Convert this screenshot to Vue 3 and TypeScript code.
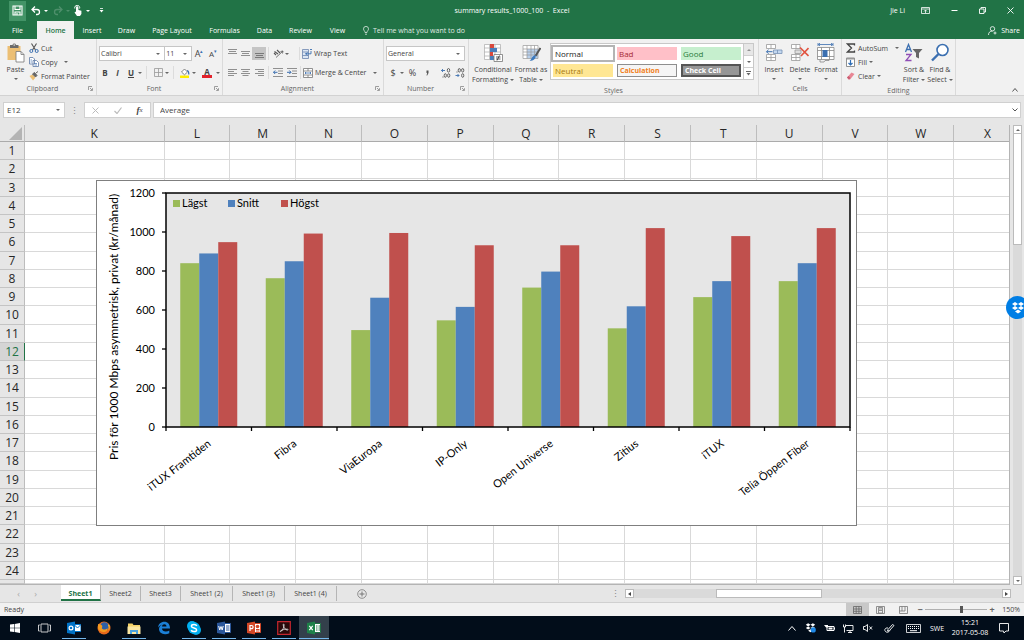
<script setup lang="ts">
import { ref } from 'vue'

interface Category {
  name: string
  values: [number, number, number]
}

const menuTabs = [
  { label: 'File', width: 37 },
  { label: 'Home', width: 37 },
  { label: 'Insert', width: 36 },
  { label: 'Draw', width: 33 },
  { label: 'Page Layout', width: 58 },
  { label: 'Formulas', width: 47 },
  { label: 'Data', width: 33 },
  { label: 'Review', width: 39 },
  { label: 'View', width: 35 },
]

const cellStyles = ['Normal', 'Bad', 'Good', 'Neutral', 'Calculation', 'Check Cell']
const columns = 'KLMNOPQRSTUVWX'.split('')
const sheets = ['Sheet1', 'Sheet2', 'Sheet3', 'Sheet1 (2)', 'Sheet1 (3)', 'Sheet1 (4)']
const activeSheet = ref('Sheet1')
const activeTab = ref('Home')
const activeRow = 12
const nameBox = ref('E12')
const formula = ref('Average')
const zoomLevel = ref(150)

const series = [
  { name: 'Lägst', color: '#9bbb59', x: 77 },
  { name: 'Snitt', color: '#4f81bd', x: 132 },
  { name: 'Högst', color: '#c0504d', x: 185 },
]

const categories: Category[] = [
  { name: 'iTUX Framtiden', values: [840, 890, 948] },
  { name: 'Fibra', values: [763, 850, 992] },
  { name: 'ViaEuropa', values: [497, 663, 995] },
  { name: 'IP-Only', values: [547, 616, 932] },
  { name: 'Open Universe', values: [715, 797, 932] },
  { name: 'Zitius', values: [506, 619, 1020] },
  { name: 'iTUX', values: [666, 748, 979] },
  { name: 'Telia Öppen Fiber', values: [748, 840, 1020] },
]

const plot = { left: 70, right: 754, top: 13, bottom: 247, max: 1200 }
const ticks = [0, 200, 400, 600, 800, 1000, 1200]
const step = (plot.right - plot.left) / categories.length
const barWidth = step / 4.5

const yOf = (v: number): number => plot.bottom - (v / plot.max) * (plot.bottom - plot.top)
const barX = (c: number, s: number): number => plot.left + c * step + barWidth * (0.75 + s)
const centerX = (c: number): number => plot.left + (c + 0.5) * step
</script>

<template>
  <div class="window">
    <header class="top">
      <div class="titlebar">
        <div class="quick">
          <button class="save" aria-label="Save">
            <svg width="11" height="11" viewBox="0 0 11 11"><path d="M1 1h9v9H1zM3 1v3.500h5V1M3 10V7h5v3M5 8v1.500" fill="none" stroke="#fff" stroke-width="1.100" /></svg>
          </button>
          <button aria-label="Undo">
            <svg width="10" height="10" viewBox="0 0 10 10"><path d="M4 0.500 1 3.500 4 6.500M1 3.500h5a2.500 2.500 0 0 1 0 5H5" fill="none" stroke="#fff" stroke-width="1.300" /></svg>
          </button>
          <i class="caret light"></i>
          <button class="faded redo" aria-label="Redo">
            <svg width="10" height="10" viewBox="0 0 10 10"><path d="M6 0.500 9 3.500 6 6.500M9 3.500H4a2.500 2.500 0 0 0 0 5h1" fill="none" stroke="#fff" stroke-width="1.300" /></svg>
          </button>
          <i class="caret light faded"></i>
          <button class="touch" aria-label="Touch mode">
            <svg width="9" height="11" viewBox="0 0 9 11"><path d="M2 6.500V2.500a1.200 1.200 0 0 1 2.400 0V5l3 .8V9L6 11H3L.5 7.500z" fill="#fff" /><path d="M.8 3.500a2.500 2.500 0 1 1 4.800 0" fill="none" stroke="#fff" /></svg>
          </button>
          <i class="caret light"></i>
          <button class="customize" aria-label="Customize toolbar">
            <svg width="5" height="5" viewBox="0 0 5 5"><path d="M1 .500h3" stroke="#fff" stroke-width=".8" /><path d="M.5 2h4L2.500 4.500z" fill="#fff" /></svg>
          </button>
        </div>
        <h1>summary results_1000_100&nbsp; -&nbsp; Excel</h1>
        <div class="account">
          <span class="user">Jie Li</span>
          <button aria-label="Ribbon options"><svg width="9" height="7" viewBox="0 0 9 7"><path d="M.5.500h8v6h-8zM.5 2h8M4.500 6V3M3 4.500 4.500 3 6 4.500" fill="none" stroke="#fff" stroke-width=".8" /></svg></button>
          <button aria-label="Minimize"><svg width="7" height="7" viewBox="0 0 7 7"><path d="M.5 3.500h6" stroke="#fff" /></svg></button>
          <button aria-label="Restore"><svg width="7" height="7" viewBox="0 0 7 7"><path d="M.5 2h4.500v4.500H.5zM2 2V.500h4.500V5H5" fill="none" stroke="#fff" stroke-width=".9" /></svg></button>
          <button aria-label="Close"><svg width="7" height="7" viewBox="0 0 7 7"><path d="m.5.500 6 6m0-6-6 6" stroke="#fff" stroke-width=".9" /></svg></button>
        </div>
      </div>
      <nav class="menu">
        <button v-for="t in menuTabs" :key="t.label" :class="{ active: t.label === activeTab }" :style="{ width: t.width + 'px' }" @click="activeTab = t.label">{{ t.label }}</button>
        <button class="tell">
          <svg width="6" height="9" viewBox="0 0 6 9"><path d="M2 6.500C2 5 .5 4.500.5 2.900a2.500 2.500 0 0 1 5 0C5.500 4.500 4 5 4 6.500zM2 8.200h2" fill="none" stroke="#fff" stroke-width=".8" /></svg>
          Tell me what you want to do
        </button>
        <button class="share">
          <svg width="9" height="9" viewBox="0 0 9 9"><circle cx="4.500" cy="2.800" r="2.200" fill="none" stroke="#fff" stroke-width=".8" /><path d="M.5 9c0-2.500 1.500-4 4-4M7 5.500v3M5.500 7h3" fill="none" stroke="#fff" stroke-width=".8" /></svg>
          Share
        </button>
      </nav>
    </header>

    <section class="ribbon">
      <div class="group clipboard">
        <div class="body">
          <button class="big paste">
            <svg width="18" height="20" viewBox="0 0 18 20"><path d="M.5 3h13v14H.5z" fill="#ecbf74" /><path d="M3 2h2.500a1.800 1.800 0 0 1 3.500 0h2.500v3H3z" fill="#6b6b6b" /><path d="M6.500 1.500h1.500v1H6.500z" fill="#fff" /><path d="M9 8.500h5l3 3v7.500H9z" fill="#fff" stroke="#777" stroke-width=".8" /><path d="M14 8.500v3h3" fill="none" stroke="#777" stroke-width=".8" /></svg>
            <span>Paste</span><i class="caret"></i>
          </button>
          <div class="stack">
            <button><svg width="10" height="10" viewBox="0 0 10 10"><path d="m2.500.500 4 6.500M7.500.500l-4 6.500" stroke="#555" stroke-width="1.100" /><circle cx="2.300" cy="8" r="1.500" fill="none" stroke="#3b6fb0" /><circle cx="7.700" cy="8" r="1.500" fill="none" stroke="#3b6fb0" /></svg>Cut</button>
            <button><svg width="10" height="10" viewBox="0 0 10 10"><path d="M.5.500H4L5.500 2v5h-5zM4 3.500h3.500l2 2v4H4z" fill="#fff" stroke="#6d87ae" stroke-width=".9" /><path d="M5.500 6.500h2.500m-2.500 1.500h2.500M1.500 3H3M1.500 5H3" stroke="#3b6fb0" stroke-width=".7" /></svg>Copy<i class="caret gap"></i></button>
            <button><svg width="10" height="10" viewBox="0 0 10 10"><path d="m.5 5 3-1.500 3 3L4 9.500z" fill="#ecbf74" /><path d="m3.500 3 2-1.500L8 4.500 6.500 6zM7 2l2-1.500" fill="#666" stroke="#666" /></svg>Format Painter</button>
          </div>
        </div>
        <footer>Clipboard<svg class="launcher" width="5" height="5" viewBox="0 0 5 5"><path d="M.5 4V.500H4M2 2l2 2M4.500 2.200v2.300H2.200" fill="none" stroke="#888" stroke-width=".8" /></svg></footer>
      </div>

      <div class="group font">
        <div class="body rows">
          <div class="row">
            <span class="combo family"><select aria-label="Font"><option>Calibri</option></select><i class="caret"></i></span>
            <span class="combo size"><select aria-label="Font size"><option>11</option></select><i class="caret"></i></span>
            <button class="grow">A<sup>▴</sup></button>
            <button class="shrink">A<sup>▾</sup></button>
          </div>
          <div class="row">
            <button class="w14"><b>B</b></button>
            <button class="w12"><b><em>I</em></b></button>
            <button class="w14"><b><u>U</u></b></button>
            <i class="caret"></i><i class="sep"></i>
            <button class="w14" aria-label="Borders"><svg width="9" height="9" viewBox="0 0 9 9"><path d="M.5.500h8v8h-8zM4.500.500v8M.5 4.500h8" fill="none" stroke="#999" stroke-width=".8" /></svg></button>
            <i class="caret"></i><i class="sep"></i>
            <button class="w14" aria-label="Fill color"><svg width="10" height="10" viewBox="0 0 10 10"><path d="M0 7.500h9V10H0z" fill="#ffee00" /><path d="m1.500 4 3-3 3 3-3 2.800z" fill="#fff" stroke="#666" stroke-width=".8" /><path d="M7 2.500c1.500.5 2 1.500 1.800 4" fill="none" stroke="#3b6fb0" stroke-width="1.200" /></svg></button>
            <i class="caret"></i>
            <button class="fontcolor" aria-label="Font color">A</button>
            <i class="caret"></i>
          </div>
        </div>
        <footer>Font<svg class="launcher" width="5" height="5" viewBox="0 0 5 5"><path d="M.5 4V.500H4M2 2l2 2M4.500 2.200v2.300H2.200" fill="none" stroke="#888" stroke-width=".8" /></svg></footer>
      </div>

      <div class="group alignment">
        <div class="body rows">
          <div class="row">
            <button class="w14" aria-label="Top align"><svg width="9" height="9" viewBox="0 0 9 9"><path d="M0 .500h9M1 2.500h7M0 4.500h9" stroke="#777" stroke-width=".8" /></svg></button>
            <button class="w12" aria-label="Middle align"><svg width="9" height="9" viewBox="0 0 9 9"><path d="M0 2.500h9M1 4.500h7M0 6.500h9" stroke="#777" stroke-width=".8" /></svg></button>
            <button class="w14 pressed" aria-label="Bottom align"><svg width="9" height="9" viewBox="0 0 9 9"><path d="M0 4.500h9M1 6.500h7M0 8.500h9" stroke="#666" stroke-width=".8" /></svg></button>
            <i class="sep"></i>
            <button class="w14" aria-label="Orientation"><svg width="11" height="9" viewBox="0 0 11 9"><path d="M3 8.500 10 2M10 2 7.500 2.500M10 2 9.500 4.500" fill="none" stroke="#666" stroke-width=".9" /><path d="m1 4 2 2M1.500 2.500 5 5M4 1l3 3" stroke="#555" stroke-width="1.100" /></svg></button>
            <i class="caret"></i><i class="sep push"></i>
            <button class="wide"><svg width="10" height="10" viewBox="0 0 10 10"><path d="M.5.500h6v9h-6zM.5 3h6M.5 6.500h6" fill="#dce7f4" stroke="#6d87ae" stroke-width=".8" /><path d="M3 4.800h6V2M5.500 3.500 4 4.800 5.500 6M8 .500h2" fill="none" stroke="#3b6fb0" stroke-width=".9" /></svg>Wrap Text</button>
          </div>
          <div class="row">
            <button class="w14" aria-label="Align left"><svg width="9" height="9" viewBox="0 0 9 9"><path d="M0 1.500h9M0 3.500h6M0 5.500h9M0 7.500h6" stroke="#777" stroke-width=".8" /></svg></button>
            <button class="w12" aria-label="Center"><svg width="9" height="9" viewBox="0 0 9 9"><path d="M0 1.500h9M1.500 3.500h6M0 5.500h9M1.500 7.500h6" stroke="#777" stroke-width=".8" /></svg></button>
            <button class="w14" aria-label="Align right"><svg width="9" height="9" viewBox="0 0 9 9"><path d="M0 1.500h9M3 3.500h6M0 5.500h9M3 7.500h6" stroke="#777" stroke-width=".8" /></svg></button>
            <i class="sep"></i>
            <button class="w14" aria-label="Decrease indent"><svg width="10" height="9" viewBox="0 0 10 9"><path d="M0 .500h10M5 3h5M5 5.500h5M0 8.500h10" stroke="#777" stroke-width=".8" /><path d="M4.500 4.300h-4M2.200 2.500.500 4.300 2.200 6" fill="none" stroke="#3b6fb0" /></svg></button>
            <button class="w12" aria-label="Increase indent"><svg width="10" height="9" viewBox="0 0 10 9"><path d="M0 .500h10M5 3h5M5 5.500h5M0 8.500h10" stroke="#777" stroke-width=".8" /><path d="M0 4.300h4M2.300 2.500 4 4.300 2.300 6" fill="none" stroke="#3b6fb0" /></svg></button>
            <i class="sep"></i>
            <button class="wide"><svg width="10" height="10" viewBox="0 0 10 10"><path d="M.5.500h9v9h-9zM.5 3h9M.5 7h9M5 .500V3M5 7v2.500" fill="#fff" stroke="#777" stroke-width=".8" /><path d="M2 5h6M3 4 2 5l1 1M7 4l1 1-1 1" fill="none" stroke="#3b6fb0" stroke-width=".8" /></svg>Merge &amp; Center<i class="caret gap"></i></button>
          </div>
        </div>
        <footer>Alignment<svg class="launcher" width="5" height="5" viewBox="0 0 5 5"><path d="M.5 4V.500H4M2 2l2 2M4.500 2.200v2.300H2.200" fill="none" stroke="#888" stroke-width=".8" /></svg></footer>
      </div>

      <div class="group number">
        <div class="body rows">
          <div class="row">
            <span class="combo format"><select aria-label="Number format"><option>General</option></select><i class="caret"></i></span>
          </div>
          <div class="row">
            <button class="w14 sign">$</button><i class="caret"></i>
            <button class="w14 sign percent-sign">%</button>
            <button class="w12 sign comma" aria-label="Comma style"><svg width="3" height="6" viewBox="0 0 3 6"><path d="M.5.500h2V3L1.200 5.500H.5L1.200 3H.5z" fill="#555" /></svg></button>
            <i class="sep"></i>
            <button class="w14" aria-label="Increase decimal"><svg width="10" height="10" viewBox="0 0 10 10"><path d="M4 2.500H.5M2 1 .5 2.500 2 4" fill="none" stroke="#3b6fb0" stroke-width=".9" /><ellipse cx="7.500" cy="2.300" rx="1.200" ry="1.800" fill="none" stroke="#555" stroke-width=".9" /><ellipse cx="4.300" cy="7.500" rx="1.100" ry="1.800" fill="none" stroke="#555" stroke-width=".9" /><ellipse cx="7.700" cy="7.500" rx="1.100" ry="1.800" fill="none" stroke="#555" stroke-width=".9" /><path d="M1.500 9h1" stroke="#555" /></svg></button>
            <button class="w14" aria-label="Decrease decimal"><svg width="10" height="10" viewBox="0 0 10 10"><path d="M.5 7.500H4M2.500 6 4 7.500 2.500 9" fill="none" stroke="#3b6fb0" stroke-width=".9" /><ellipse cx="4.300" cy="2.300" rx="1.100" ry="1.800" fill="none" stroke="#555" stroke-width=".9" /><ellipse cx="7.700" cy="2.300" rx="1.100" ry="1.800" fill="none" stroke="#555" stroke-width=".9" /><ellipse cx="7.700" cy="7.500" rx="1.100" ry="1.800" fill="none" stroke="#555" stroke-width=".9" /><path d="M1.500 4h1" stroke="#555" /></svg></button>
          </div>
        </div>
        <footer>Number<svg class="launcher" width="5" height="5" viewBox="0 0 5 5"><path d="M.5 4V.500H4M2 2l2 2M4.500 2.200v2.300H2.200" fill="none" stroke="#888" stroke-width=".8" /></svg></footer>
      </div>

      <div class="group styles">
        <div class="body">
          <button class="big conditional">
            <svg width="19" height="20" viewBox="0 0 19 20"><path d="M.5 1.500h16v15H.5zM.5 5h16M.5 9h16M.5 13h16M5.500 1.500v15M11 1.500v15" fill="#fff" stroke="#aaa" stroke-width=".7" /><path d="M6 1h4v4H6zM6 9h3v4H6z" fill="#d9493d" /><path d="M6 5h7v4H6zM6 13h4v4H6z" fill="#4a7ebb" /><path d="M10 11.500h8.500v7H10z" fill="#fff" stroke="#777" stroke-width=".8" /><path d="M12 14h4.500M12 16h4.500M15.500 12.500l-2.500 5" stroke="#333" stroke-width=".8" /></svg>
            <span>Conditional</span><span>Formatting<i class="caret"></i></span>
          </button>
          <button class="big astable">
            <svg width="19" height="20" viewBox="0 0 19 20"><path d="M1 2.500h15v13H1z" fill="#fff" /><path d="M5 6h11v9.500H5z" fill="#b8d0ec" /><path d="M1 2.500h15v13H1zM1 6h15M1 9h15M1 12h15M5 2.500v13M9 2.500v13M12.500 2.500v13" fill="none" stroke="#999" stroke-width=".7" /><path d="m18.500 5-5 8" stroke="#555" stroke-width="2" /><path d="M13.500 12c1 3-2 6-6 6 2-1 2-5 6-6z" fill="#3b78bd" /></svg>
            <span>Format as</span><span>Table<i class="caret"></i></span>
          </button>
          <div class="gallery">
            <button v-for="s in cellStyles" :key="s" :class="s.toLowerCase().replace(' ', '-')"><span>{{ s }}</span></button>
          </div>
          <div class="gallery-nav">
            <button class="off" aria-label="Previous styles"><i class="caret up"></i></button>
            <button aria-label="Next styles"><i class="caret"></i></button>
            <button class="more" aria-label="More styles"><svg width="5" height="5" viewBox="0 0 5 5"><path d="M0 .500h5" stroke="#666" /><path d="M.5 2h4L2.500 4.500z" fill="#666" /></svg></button>
          </div>
        </div>
        <footer>Styles</footer>
      </div>

      <div class="group cells">
        <div class="body">
          <button class="big">
            <svg width="18" height="20" viewBox="0 0 18 20"><path d="M1.500 1.500h9v4h-9zM6 1.500v4M1.500 11.500h9v6h-9zM6 11.500v6M1.500 14.500h9" fill="#fff" stroke="#999" stroke-width=".8" /><path d="M8.500 7h8.500v3.500H8.500zM12.500 7v3.500" fill="#c3d7ef" stroke="#7792b5" stroke-width=".8" /><path d="M7.500 8.700H1.500M3.500 6.800 1.500 8.700l2 2" fill="none" stroke="#3b6fb0" /></svg>
            <span>Insert</span><i class="caret"></i>
          </button>
          <button class="big">
            <svg width="18" height="20" viewBox="0 0 18 20"><path d="M.5 1.500h8.500v4H.5zM5 1.500v4M.5 11.500h8.500v6H.5zM5 11.500v6M.5 14.500h8.500" fill="#fff" stroke="#999" stroke-width=".8" /><path d="M4 7h6v3.500H4z" fill="#ddd" stroke="#999" stroke-width=".8" /><path d="m9 4.500 8.500 8.500M17.500 5 10 13" stroke="#e1533f" stroke-width="1.600" /></svg>
            <span>Delete</span><i class="caret"></i>
          </button>
          <button class="big">
            <svg width="18" height="20" viewBox="0 0 18 20"><path d="M1.500 1.500h14M3 0 1.500 1.500 3 3M14 0l1.500 1.500L14 3M1 0v3M16 0v3" fill="none" stroke="#3b6fb0" stroke-width=".8" /><path d="M.5 4.500h16.500v12H.5zM.5 7.500h16.500M.5 13.500h16.500M4.500 4.500v12M12.500 4.500v12" fill="#fff" stroke="#888" stroke-width=".8" /><path d="M5.500 7h5v7h-5z" fill="#3b6fb0" /><path d="M3 17v2h4l1-1.500h4v-1" fill="none" stroke="#888" stroke-width=".8" /></svg>
            <span>Format</span><i class="caret"></i>
          </button>
        </div>
        <footer>Cells</footer>
      </div>

      <div class="group editing">
        <div class="body">
          <div class="stack">
            <button><svg width="10" height="10" viewBox="0 0 10 10"><path d="M8.500 2.500V1h-7l4 4-4 4h7V7.500" fill="none" stroke="#444" stroke-width="1.300" /></svg>AutoSum<i class="caret gap"></i></button>
            <button><svg width="10" height="10" viewBox="0 0 10 10"><path d="M.5 1h8v8.500h-8z" fill="#fff" stroke="#777" stroke-width=".8" /><path d="M.5 1h8v1.500h-8z" fill="#999" /><path d="M4.500 3v5M2.500 6l2 2 2-2" fill="none" stroke="#2f6db5" stroke-width="1.200" /></svg>Fill<i class="caret"></i></button>
            <button><svg width="10" height="10" viewBox="0 0 10 10"><path d="m1 6.500 4.500-5L8.500 3 4 8.500H2.500z" fill="#e88795" /><path d="m1 6.500 2 2 1.500-1.500-2-2z" fill="#c95c72" /></svg>Clear<i class="caret"></i></button>
          </div>
          <button class="big sort">
            <svg width="20" height="20" viewBox="0 0 20 20"><path d="m1.500 9 3-7.500 3 7.500M2.500 6.500h4" fill="none" stroke="#3b6fb0" stroke-width="1.300" /><path d="M2 11.500h5L2 17.500h5.500" fill="none" stroke="#8f4db5" stroke-width="1.300" /><path d="M8.500 6h10l-3.500 4v5.500l-3-1.500v-4z" fill="#666" /></svg>
            <span>Sort &amp;</span><span>Filter<i class="caret"></i></span>
          </button>
          <button class="big find">
            <svg width="20" height="20" viewBox="0 0 20 20"><circle cx="12.500" cy="7" r="5.500" fill="#fff" stroke="#3b6fb0" stroke-width="1.600" /><path d="m8.500 11-6.500 6.500" stroke="#3b6fb0" stroke-width="2.400" /></svg>
            <span>Find &amp;</span><span>Select<i class="caret"></i></span>
          </button>
        </div>
        <footer>Editing</footer>
      </div>
      <button class="collapse" aria-label="Collapse ribbon"><svg width="6" height="4" viewBox="0 0 6 4"><path d="m.5 3.500 2.500-3 2.500 3" fill="none" stroke="#555" /></svg></button>
    </section>

    <section class="formula">
      <label class="namebox"><input v-model="nameBox" aria-label="Name box" /><i class="caret"></i></label>
      <span class="dots">⋮</span>
      <div class="fx">
        <button aria-label="Cancel"><svg width="7" height="7" viewBox="0 0 7 7"><path d="m.5.500 6 6m0-6-6 6" stroke="#bbb" /></svg></button>
        <button aria-label="Enter"><svg width="8" height="7" viewBox="0 0 8 7"><path d="m.5 4 2.500 2.500L7.500.500" fill="none" stroke="#bbb" stroke-width="1.200" /></svg></button>
        <button class="fn"><b>f</b><sub>x</sub></button>
      </div>
      <div class="content">
        <input v-model="formula" aria-label="Formula" />
        <button aria-label="Expand formula bar"><svg width="6" height="4" viewBox="0 0 6 4"><path d="m.5.500 2.500 2.500L5.500.500" fill="none" stroke="#555" /></svg></button>
      </div>
    </section>

    <main class="sheet">
      <div class="cells-area">
        <table>
          <thead>
            <tr>
              <th class="corner" aria-label="Select all"><svg width="13" height="13" viewBox="0 0 13 13"><path d="M13 0v13H0z" fill="#b4b4b4" /></svg></th>
              <th v-for="c in columns" :key="c" :class="{ last: c === 'X' }">{{ c }}</th>
            </tr>
          </thead>
          <tbody>
            <tr v-for="r in 24" :key="r">
              <th :class="{ current: r === activeRow }">{{ r }}</th>
              <td v-for="c in columns" :key="c"></td>
            </tr>
            <tr><th></th><td v-for="c in columns" :key="c"></td></tr>
          </tbody>
        </table>
        <svg class="chart" viewBox="0 0 761 346" role="img" aria-label="Pris för 1000 Mbps asymmetrisk, privat">
          <rect x=".5" y=".5" width="760" height="345" fill="#fff" stroke="#7f7f7f" />
          <rect :x="plot.left" :y="plot.top" :width="plot.right - plot.left" :height="plot.bottom - plot.top" fill="#e6e6e6" />
          <g v-for="(cat, c) in categories" :key="cat.name">
            <rect v-for="(v, s) in cat.values" :key="s" :x="barX(c, s)" :y="yOf(v)" :width="barWidth" :height="plot.bottom - yOf(v)" :fill="series[s].color" />
          </g>
          <rect :x="plot.left" :y="plot.top" :width="plot.right - plot.left" :height="plot.bottom - plot.top" fill="none" stroke="#000" stroke-width="1.500" />
          <g v-for="t in ticks" :key="t">
            <line :x1="plot.left - 4" :x2="plot.left" :y1="yOf(t)" :y2="yOf(t)" stroke="#000" stroke-width="1.300" />
            <text :x="plot.left - 11" :y="yOf(t) + 4" text-anchor="end">{{ t }}</text>
          </g>
          <line v-for="n in categories.length + 1" :key="n" :x1="plot.left + (n - 1) * step" :x2="plot.left + (n - 1) * step" :y1="plot.bottom" :y2="plot.bottom + 4" stroke="#000" stroke-width="1.300" />
          <text v-for="(cat, c) in categories" :key="cat.name" :transform="`translate(${centerX(c) + 3} 265) rotate(-37.500)`" text-anchor="end">{{ cat.name }}</text>
          <g v-for="s in series" :key="s.name">
            <rect :x="s.x" y="20" width="7" height="7" :fill="s.color" />
            <text :x="s.x + 9" y="27">{{ s.name }}</text>
          </g>
          <text class="axis" transform="translate(22 147) rotate(-90)" text-anchor="middle">Pris för 1000 Mbps asymmetrisk, privat (kr/månad)</text>
        </svg>
      </div>
      <div class="vscroll">
        <button aria-label="Scroll up"><i class="caret up"></i></button>
        <span class="vthumb"></span>
        <span class="vtrack"></span>
        <button aria-label="Scroll down"><i class="caret"></i></button>
      </div>
      <button class="dropbox" aria-label="Dropbox badge">
        <svg width="14" height="12" viewBox="0 0 14 12"><path d="M4 0 7 2 4 4 1 2zM10 0l3 2-3 2-3-2zM4 4l3 2-3 2-3-2zM10 4l3 2-3 2-3-2zM7 7.500l3 2-3 2-3-2z" fill="#fff" /></svg>
      </button>
    </main>

    <nav class="sheetbar">
      <button class="step" aria-label="Previous sheet">‹</button>
      <button class="step" aria-label="Next sheet">›</button>
      <span class="tabs">
        <button v-for="s in sheets" :key="s" :class="{ active: s === activeSheet, long: s.length > 6 }" @click="activeSheet = s">{{ s }}</button>
      </span>
      <button class="add" aria-label="New sheet"><svg width="10" height="10" viewBox="0 0 10 10"><circle cx="5" cy="5" r="4.300" fill="none" stroke="#777" stroke-width=".8" /><path d="M5 2.500v5M2.500 5h5" stroke="#777" /></svg></button>
      <span class="dots">⋮</span>
      <div class="hscroll">
        <button aria-label="Scroll left"><i class="caret west"></i></button>
        <span class="hthumb"></span>
        <button aria-label="Scroll right"><i class="caret east"></i></button>
      </div>
    </nav>

    <footer class="status">
      <span class="ready">Ready</span>
      <button class="view on" aria-label="Normal view"><svg width="9" height="8" viewBox="0 0 9 8"><path d="M.5.500h8v7h-8zM.5 3h8M.5 5.300h8M3.200.500v7M5.900.500v7" fill="none" stroke="#666" stroke-width=".8" /></svg></button>
      <button class="view" aria-label="Page layout view"><svg width="9" height="8" viewBox="0 0 9 8"><path d="M.5.500h8v7h-8zM2.500 1.500h4v5.500h-4zM3 3h3M3 4.500h3" fill="none" stroke="#777" stroke-width=".8" /></svg></button>
      <button class="view" aria-label="Page break view"><svg width="9" height="8" viewBox="0 0 9 8"><path d="M.5.500h8v7h-8zM.5 5h5.500V.500M3 .500V5" fill="none" stroke="#777" stroke-width=".8" /></svg></button>
      <button class="sign">−</button>
      <input v-model="zoomLevel" type="range" min="0" max="255" aria-label="Zoom" />
      <button class="sign">+</button>
      <span class="percent">{{ zoomLevel }}%</span>
    </footer>

    <nav class="taskbar">
      <button aria-label="Start"><svg width="12" height="12" viewBox="0 0 12 12"><path d="M1 2.500 5 2v3.700H1zM5.600 1.900 11 1v4.700H5.600zM1 6.300h4V10l-4-.500zM5.600 6.300H11V11l-5.400-.900z" fill="#fff" /></svg></button>
      <button aria-label="Task view"><svg width="13" height="10" viewBox="0 0 13 10"><path d="M3 1h7v8H3zM1.800 2H.5v6h1.300M11.200 2h1.300v6h-1.300" fill="none" stroke="#ddd" stroke-width=".9" /></svg></button>
      <button class="open app" aria-label="Outlook"><svg width="14" height="14" viewBox="0 0 14 14"><path d="M7 3.500h7v7H7z" fill="#fff" stroke="#0072c6" /><path d="m7.500 4 3 3 3-3" fill="none" stroke="#0072c6" /><path d="M0 2 8 .500v13L0 12z" fill="#0072c6" /><circle cx="4" cy="7" r="1.900" fill="none" stroke="#fff" stroke-width="1.200" /></svg></button>
      <button aria-label="Firefox"><svg width="14" height="14" viewBox="0 0 14 14"><circle cx="7" cy="7" r="6.500" fill="#e8691b" /><circle cx="7.500" cy="5.500" r="4.300" fill="#2d5fa8" /><path d="M1 3c1 .5 3 0 4 1.500S4 7 5.500 8s4 .5 5-1c.5 2-1 4-3.500 4S1.500 9.500 1 7z" fill="#f39a20" /><path d="M12 3c1 2.500.8 5-.5 6.500.5-2 .3-4-.5-5z" fill="#fbc02d" /></svg></button>
      <button class="open" aria-label="File Explorer"><svg width="14" height="13" viewBox="0 0 14 13"><path d="M1 1.500h4.500l1 1.500H13v9H1z" fill="#f3d169" /><path d="M.5 4.500h13V12H.5z" fill="#fbe7a2" /><path d="M3 8h8v4H9v-2H5v2H3z" fill="#4aa3df" /></svg></button>
      <button aria-label="Edge"><svg width="14" height="14" viewBox="0 0 14 14"><path d="M1 6.500C1.500 3 4 .800 7.300.800c3.500 0 5.700 2.700 5.700 6.700H5c0 2 1.700 3 3.800 3 1.300 0 2.500-.4 3.500-1v2.700c-1.200.7-2.700 1-4.200 1C4.500 13.200 2 11 2 8c0-2 1-3.500 3-4.300C3.500 4 2 5 1 6.500zM5 5.500h4.500C9.500 4 8.500 3.300 7.300 3.300S5.200 4 5 5.500z" fill="#1b7fd6" /></svg></button>
      <button class="open" aria-label="Skype"><svg width="14" height="14" viewBox="0 0 14 14"><rect width="10" height="10" rx="5" fill="#00aff0" /><rect x="4" y="4" width="10" height="10" rx="5" fill="#00aff0" /><circle cx="7" cy="7" r="6" fill="#00aff0" /><path d="M9.800 4.800C9.300 3.800 8.200 3.500 7 3.500c-1.500 0-2.600.6-2.600 1.700 0 2.500 5.200 1.200 5.200 3.700 0 1.100-1.100 1.700-2.600 1.700-1.400 0-2.400-.5-2.800-1.500" fill="none" stroke="#fff" stroke-width="1.500" /></svg></button>
      <button class="open app" aria-label="Word"><svg width="14" height="14" viewBox="0 0 14 14"><path d="M7 2.500h6.500v9H7z" fill="#fff" stroke="#2b579a" /><path d="M9 5h3.500M9 7h3.500M9 9h3.500" stroke="#2b579a" /><path d="M0 2 8 .500v13L0 12z" fill="#2b579a" /><path d="m1.700 5 1 4L4 5.500 5.200 9l1-4" fill="none" stroke="#fff" /></svg></button>
      <button class="open app" aria-label="PowerPoint"><svg width="14" height="14" viewBox="0 0 14 14"><path d="M7 2.500h6.500v9H7z" fill="#fff" stroke="#d24726" /><path d="M9 8.500h3.500M9 10h3.500" stroke="#d24726" /><circle cx="10.500" cy="5.500" r="1.800" fill="#d24726" /><path d="M0 2 8 .500v13L0 12z" fill="#d24726" /><path d="M3 10V4.500h1.500a1.500 1.500 0 0 1 0 3.200H3" fill="none" stroke="#fff" stroke-width="1.200" /></svg></button>
      <button class="open" aria-label="Acrobat"><svg width="14" height="14" viewBox="0 0 14 14"><path d="M.7.700h12.600v12.600H.7z" fill="#2a0a0a" stroke="#c4262e" stroke-width="1.200" /><path d="M6.500 3c1 0 .6 2.500-.3 4.500S3.800 11 3.200 10.500 6 8 10.500 8.200c1 .2.500 1.200-.5.900C8 8.500 6.200 5.500 6.200 3.800c0-.5.100-.8.300-.8z" fill="none" stroke="#eee" stroke-width=".8" /></svg></button>
      <button class="open app here" aria-label="Excel"><svg width="14" height="14" viewBox="0 0 14 14"><path d="M7 2.500h6.500v9H7z" fill="#fff" stroke="#217346" /><path d="M9 5h1.500M9 7h1.500M9 9h1.500M11.500 5H13M11.500 7H13M11.500 9H13" stroke="#217346" /><path d="M0 2 8 .500v13L0 12z" fill="#1e8149" /><path d="m2.300 4.800 3.400 4.400M5.700 4.800 2.300 9.200" stroke="#fff" stroke-width="1.200" /></svg></button>
      <div class="tray">
        <button class="t20" aria-label="Hidden icons"><svg width="8" height="5" viewBox="0 0 8 5"><path d="m.5 4.500 3.500-4 3.500 4" fill="none" stroke="#fff" /></svg></button>
        <button class="t20" aria-label="Dropbox"><svg width="11" height="10" viewBox="0 0 14 12"><path d="M4 0 7 2 4 4 1 2zM10 0l3 2-3 2-3-2zM4 4l3 2-3 2-3-2zM10 4l3 2-3 2-3-2zM7 7.500l3 2-3 2-3-2z" fill="#fff" /><circle cx="10.500" cy="8.500" r="3.300" fill="#1e88e5" /></svg></button>
        <button class="t20" aria-label="Battery"><svg width="11" height="8" viewBox="0 0 11 8"><path d="M3 2.500h7v4H3zM10.500 3.500v2" fill="none" stroke="#fff" /><path d="M4.500 3.500h4v2h-4zM0 1h4v2.500H2z" fill="#fff" /></svg></button>
        <button class="t20" aria-label="Network"><svg width="11" height="9" viewBox="0 0 11 9"><path d="M3 1.500h7v5H3.500M5 8.500h4M7 6.500v2M.5.500v2.500h2V.500M1.500 3v5.500" fill="none" stroke="#fff" stroke-width=".9" /></svg></button>
        <button class="t20" aria-label="Volume"><svg width="10" height="8" viewBox="0 0 10 8"><path d="M.5 2.500H2L4.500.500v7L2 5.500H.5zM6.500 2.500l2.500 3M9 2.500l-2.500 3" fill="none" stroke="#fff" stroke-width=".9" /></svg></button>
        <button class="t24" aria-label="Pen"><svg width="11" height="10" viewBox="0 0 11 10"><path d="M4 6.500 8.500 1.500l1.500 1L5.500 7.500 3.500 8zM4 5C1 4.500 0 7 1.500 8.500S5 9 6 7.500" fill="none" stroke="#fff" stroke-width=".9" /></svg></button>
        <button class="t24" aria-label="Keyboard"><svg width="15" height="9" viewBox="0 0 15 9"><path d="M.5.500h14v8H.5z" fill="none" stroke="#fff" stroke-width=".8" /><path d="M2 2.500h11M2 4.500h11" stroke="#fff" stroke-dasharray="1 1" /><path d="M4 6.700h7" stroke="#fff" /></svg></button>
        <span class="lang">SWE</span>
        <time>15:21<br />2017-05-08</time>
        <button class="notice" aria-label="Notifications"><svg width="10" height="11" viewBox="0 0 10 11"><path d="M.5.500h9v7.500H7L5 10 4.500 8h-4z" fill="none" stroke="#fff" stroke-width=".9" /></svg></button>
      </div>
    </nav>
  </div>
</template>

<style>
html, body { margin: 0; background: #e6e6e6; }
</style>

<style scoped>
.window {
  display: flex;
  flex-direction: column;
  min-height: 100vh;
  overflow: hidden;
  font: 7px/9px "Open Sans", "Noto Sans", sans-serif;
  color: #444;
}
* { box-sizing: border-box; }
button, select, input {
  margin: 0; padding: 0; border: 0; background: none;
  font: inherit; color: inherit; outline: none;
}
button { display: flex; align-items: center; justify-content: center; flex-shrink: 0; white-space: nowrap; }
svg { display: block; flex-shrink: 0; }

.caret { display: inline-block; flex-shrink: 0; width: 0; height: 0; border: 2px solid transparent; border-top-color: #666; border-bottom-width: 0; }
.caret.up { border-top-width: 0; border-bottom: 2px solid #666; }
.caret.west { border: 2px solid transparent; border-left-width: 0; border-right: 3px solid #444; }
.caret.east { border: 2px solid transparent; border-right-width: 0; border-left: 3px solid #444; }
.caret.light { border-top-color: #fff; }
.caret.gap { margin-left: 5px; }
.faded { opacity: .2; }

.top { background: #217346; color: #fff; }
.titlebar { display: grid; grid-template-columns: 1fr auto 1fr; align-items: center; height: 21px; }
.quick { display: flex; align-items: center; gap: 3px; padding-left: 9px; }
.save { width: 17px; height: 20px; margin-right: 2px; background: #439467; }
.redo { margin-left: 2px; }
.touch { margin-left: 1px; }
.quick .customize { margin-left: 6px; }
h1 { margin: 0; font: inherit; white-space: pre; }
.account { display: flex; justify-content: flex-end; align-items: center; gap: 21px; padding-right: 10px; }
.user { margin-right: -5px; }
.menu { display: flex; height: 18px; }
.menu button { height: 18px; color: #fff; }
.menu button:first-child { padding-right: 2px; }
.menu button.active { background: #f1f1f1; color: #217346; font-weight: 600; }
.menu .tell { gap: 4px; margin-left: 8px; opacity: .85; }
.menu .share { gap: 4px; margin-left: auto; padding-right: 4px; }

.ribbon { display: flex; height: 57px; background: #f1f1f1; border-bottom: 1px solid #d2d2d2; }
.group { display: flex; flex-direction: column; flex-shrink: 0; border-right: 1px solid #dadada; }
.group .body { display: flex; height: 46px; }
.group footer { display: flex; justify-content: center; position: relative; line-height: 12px; color: #666; }
.clipboard footer, .font footer, .alignment footer, .number footer { padding-right: 11px; }
.launcher { position: absolute; right: 3px; top: 3px; }
.clipboard { width: 97px; }
.font { width: 126px; }
.alignment { width: 161px; }
.number { width: 85px; }
.styles { width: 290px; }
.cells { width: 83px; }
.editing { width: 114px; }
.big { flex-direction: column; justify-content: flex-start; width: 26px; padding-top: 4px; line-height: 10px; }
.big svg { margin-bottom: 2px; }
.big span { display: flex; align-items: center; gap: 2px; }
.big > .caret { margin-top: 3px; }
.paste { width: 29px; padding-left: 2px; }
.stack { display: flex; flex-direction: column; padding-top: 2px; }
.stack button { justify-content: flex-start; gap: 2px; height: 14px; }
.rows { flex-direction: column; padding: 7px 2px 0; gap: 4px; }
.row { display: flex; align-items: center; height: 15px; }
.combo { display: flex; align-items: center; height: 15px; padding-right: 4px; background: #fff; border: 1px solid #c6c6c6; }
.combo select { flex: 1; min-width: 0; padding-left: 1px; appearance: none; }
.family { width: 67px; }
.size { width: 27px; border-left: 0; }
.format { flex: 1; margin-right: 1px; }
.grow, .shrink { width: 14px; font-size: 9px; }
.shrink { font-size: 8px; }
.grow sup, .shrink sup { font-size: 5px; line-height: 5px; align-self: flex-start; color: #3b6fb0; }
.w14 { width: 14px; height: 13px; }
.w12 { width: 13px; height: 13px; }
.pressed { background: #c5c5c5; }
.font .row b { font-size: 8px; }
.font .row .w14:first-child { width: 12px; }
.sep { width: 1px; height: 13px; margin: 0 4px; background: #dcdcdc; }
.alignment .sep { margin: 0 2px; }
.alignment .sep.push { margin-left: 10px; }
.wide { gap: 2px; }
.fontcolor { width: 10px; height: 10px; margin: 0 4px 0 6px; border-bottom: 3px solid #e3222b; font-weight: 700; font-size: 8px; line-height: 7px; }
.number .sign { font-size: 9px; }
.number .sep { margin: 0 2px 0 3px; }
.number .percent-sign { width: 17px; }
.conditional { width: 45px; padding-left: 3px; }
.astable { width: 34px; }
.gallery {
  display: grid; flex: 1; grid-template-columns: repeat(3, 1fr); gap: 4px; height: 37px; margin: 4px 0 0 2px; padding: 3px 2px;
  background: #fff; border: 1px solid #c8c8c8; font-size: 8px;
}
.gallery button { justify-content: flex-start; padding-left: 2px; height: 13px; }
.gallery .normal { outline: 2px solid #b4b4b4; color: #222; }
.gallery .bad { background: #ffc0c8; color: #a52a35; }
.gallery .good { background: #c6efce; color: #2b7a3c; }
.gallery .neutral { background: #ffe794; color: #a8780f; }
.gallery .calculation { background: #f5f5f5; border: 1px solid #8e8e8e; color: #f28020; font-weight: 700; font-size: 7px; }
.gallery .check-cell { background: #969696; border: 2px double #555; color: #fff; font-weight: 700; font-size: 7px; }
.gallery-nav { display: flex; flex-direction: column; width: 10px; height: 37px; margin: 4px 4px 0 0; border: 1px solid #c8c8c8; border-left: 0; background: #fff; }
.gallery-nav button { flex: 1; }
.gallery-nav button + button { border-top: 1px solid #d0d0d0; }
.gallery-nav .off { background: #dedede; opacity: .7; }
.cells .body { padding-left: 2px; }
.editing .stack { width: 59px; padding-left: 4px; }
.editing .big { width: 26px; }
.collapse { align-self: flex-end; margin-left: auto; width: 18px; height: 10px; }

.formula { display: flex; align-items: center; height: 29px; padding: 0 3px 1px; }
.namebox { display: flex; align-items: center; width: 62px; height: 16px; padding-right: 4px; background: #fff; border: 1px solid #d0d0d0; }
.namebox input { flex: 1; min-width: 0; padding-left: 3px; }
.dots { width: 19px; text-align: center; color: #888; font-size: 9px; }
.fx { display: flex; align-items: center; justify-content: space-around; width: 67px; height: 16px; background: #fff; border: 1px solid #d0d0d0; }
.fn { font: italic 9px/10px "Liberation Serif", serif; }
.fn sub { font-size: 7px; }
.content { display: flex; flex: 1; height: 16px; margin-left: 2px; padding-right: 2px; background: #fff; border: 1px solid #d0d0d0; }
.content input { flex: 1; padding-left: 6px; }
.formula input { height: 14px; font-size: 8px; line-height: 14px; }

.sheet { display: flex; flex: 1; position: relative; background: #e6e6e6; }
.cells-area { display: flex; flex: 1; position: relative; }
table {
  display: grid; flex: 1;
  grid-template-columns: 25px 140fr repeat(12, 66fr) 55fr;
  grid-template-rows: 17px repeat(24, 1fr) 4px;
  background: #fff; border-right: 1px solid #b4b4b4; border-bottom: 1px solid #b4b4b4;
  font-size: 12px; color: #262626;
}
thead, tbody, tr { display: contents; }
th { padding: 0; min-height: 0; background: #e6e6e6; font-weight: 400; text-align: center; border-right: 1px solid #bdbdbd; border-bottom: 1px solid #c4c4c4; overflow: hidden; line-height: 17px; }
tbody th { line-height: 18px; height: 100%; }
thead th { border-bottom-color: #ababab; }
thead th.last { padding-left: 12px; border-right: 0; }
th.corner { display: flex; align-items: flex-end; justify-content: flex-end; padding: 0 2px 1px 0; }
th.current { background: #d5d5d5; color: #217346; border-right-color: #217346; }
td { padding: 0; border-right: 1px solid #d9d9d9; border-bottom: 1px solid #d9d9d9; }
td:last-child { border-right: 0; }
tbody tr th { line-height: 17px; }
.chart { position: absolute; left: 96px; right: 153px; top: 55px; width: calc(100% - 249px); }
.chart text { font: 11px Lato, sans-serif; fill: #000; }
.chart .axis { font-size: 12px; }
.vscroll { display: flex; flex-direction: column; width: 14px; padding: 0 2px 0 3px; }
.vscroll button { height: 9px; background: #fff; border: 1px solid #bbb; }
.vthumb { height: 111px; background: #fff; border: 1px solid #bbb; border-top: 0; }
.vtrack { flex: 1; background: #dadada; }
.dropbox { position: absolute; right: -5px; top: 171px; width: 23px; height: 23px; border-radius: 50%; background: #007ee5; }

.sheetbar { display: flex; align-items: center; height: 17px; background: #e6e6e6; }
.step { width: 17px; color: #aaa; font-size: 9px; }
.step:first-child { margin-left: 10px; }
.tabs { display: flex; align-self: flex-start; margin-left: 17px; }
.tabs button { width: 40px; height: 15px; margin: 1px 0; border-right: 1px solid #b5b5b5; }
.tabs button.long { width: 52px; }
.tabs .active { height: 16px; margin: 0; padding-top: 2px; background: #fff; color: #217346; font-weight: 700; border-bottom: 2px solid #217346; }
.add { margin-left: 20px; }
.sheetbar .dots { margin-left: auto; }
.hscroll { display: flex; width: 386px; height: 9px; margin-right: 13px; background: #dadada; }
.hscroll button { width: 9px; background: #fff; border: 1px solid #bbb; }
.hthumb { width: 106px; margin: 0 auto 0 82px; background: #fff; border: 1px solid #bbb; }

.status { display: flex; align-items: center; height: 14px; background: #f1f1f1; border-top: 1px solid #d0d0d0; }
.ready { margin: 0 auto 0 4px; }
.view { width: 23px; height: 13px; }
.view.on { background: #c8c8c8; }
.status .sign { width: 10px; font-size: 9px; font-weight: 700; color: #666; }
.status input { width: 62px; height: 10px; appearance: none; background: linear-gradient(#b0b0b0, #b0b0b0) center / 100% 1px no-repeat; }
.status input::-webkit-slider-thumb { appearance: none; width: 3px; height: 7px; background: #555; }
.percent { width: 23px; margin: 0 4px 0 0; text-align: right; }

.taskbar { display: flex; height: 24px; background: #020d1a; color: #fff; }
.taskbar > button { width: 30px; height: 24px; border-top: 1px solid transparent; border-bottom: 1px solid transparent; }
.taskbar > button:first-child { width: 29px; }
.taskbar > .open { background: linear-gradient(#76b9ed, #76b9ed) center bottom / 24px 1px no-repeat; }
.taskbar > .here { background: linear-gradient(#76b9ed, #76b9ed) center bottom / 30px 1px no-repeat #33404b; }
.tray { display: flex; align-items: center; margin-left: auto; }
.tray button { height: 24px; }
.t20 { width: 19px; }
.t24 { width: 24px; }
.lang { width: 24px; text-align: center; }
time { width: 42px; line-height: 10px; text-align: center; }
.notice { width: 33px; padding-right: 7px; }
</style>
